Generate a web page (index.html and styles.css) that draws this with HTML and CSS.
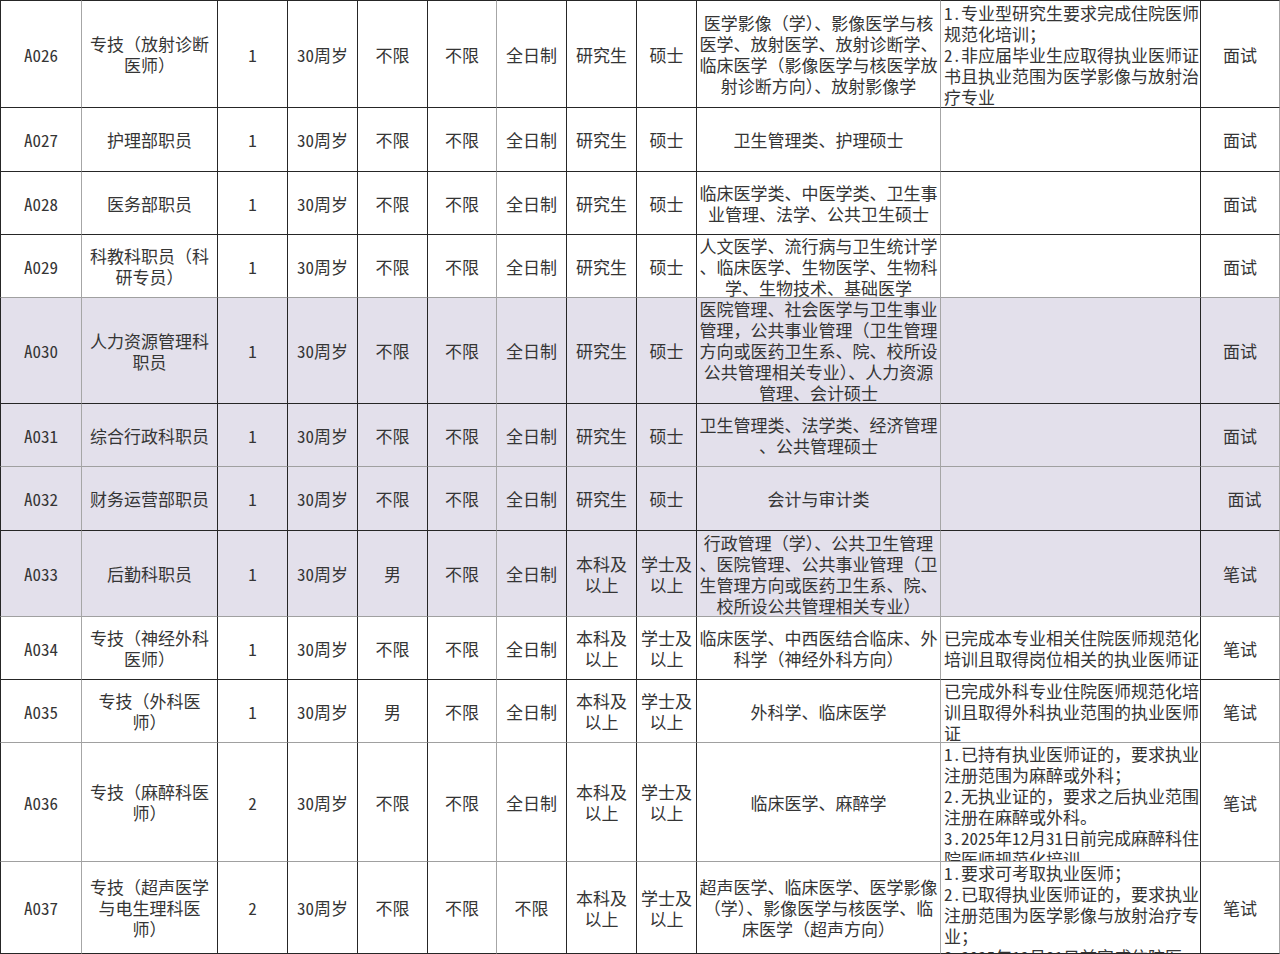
FILE: index.html
```html
<!DOCTYPE html>
<html lang="zh-CN">
<head>
<meta charset="utf-8">
<title>岗位表</title>
<link rel="stylesheet" href="styles.css">
</head>
<body>
<div class="sheet">
  <!-- A026 -->
  <div class="c c1 first">A026</div>
  <div class="c first">专技（放射诊断<br>医师）</div>
  <div class="c first">1</div>
  <div class="c first">30周岁</div>
  <div class="c first">不限</div>
  <div class="c g first">不限</div>
  <div class="c first">全日制</div>
  <div class="c first">研究生</div>
  <div class="c first">硕士</div>
  <div class="c g first">医学影像（学）、影像医学与核<br>医学、放射医学、放射诊断学、<br>临床医学（影像医学与核医学放<br>射诊断方向）、放射影像学</div>
  <div class="c rm first">1.专业型研究生要求完成住院医师<br>规范化培训；<br>2.非应届毕业生应取得执业医师证<br>书且执业范围为医学影像与放射治<br>疗专业</div>
  <div class="c ge first">面试</div>

  <!-- A027 -->
  <div class="c c1">A027</div>
  <div class="c">护理部职员</div>
  <div class="c">1</div>
  <div class="c">30周岁</div>
  <div class="c">不限</div>
  <div class="c g">不限</div>
  <div class="c">全日制</div>
  <div class="c">研究生</div>
  <div class="c">硕士</div>
  <div class="c g">卫生管理类、护理硕士</div>
  <div class="c rm"></div>
  <div class="c ge">面试</div>

  <!-- A028 -->
  <div class="c c1">A028</div>
  <div class="c">医务部职员</div>
  <div class="c">1</div>
  <div class="c">30周岁</div>
  <div class="c">不限</div>
  <div class="c g">不限</div>
  <div class="c">全日制</div>
  <div class="c">研究生</div>
  <div class="c">硕士</div>
  <div class="c g">临床医学类、中医学类、卫生事<br>业管理、法学、公共卫生硕士</div>
  <div class="c rm"></div>
  <div class="c ge">面试</div>

  <!-- A029 -->
  <div class="c c1 gb">A029</div>
  <div class="c gb">科教科职员（科<br>研专员）</div>
  <div class="c gb">1</div>
  <div class="c gb">30周岁</div>
  <div class="c gb">不限</div>
  <div class="c g gb">不限</div>
  <div class="c gb">全日制</div>
  <div class="c gb">研究生</div>
  <div class="c gb">硕士</div>
  <div class="c g gb">人文医学、流行病与卫生统计学<br>、临床医学、生物医学、生物科<br>学、生物技术、基础医学</div>
  <div class="c rm gb"></div>
  <div class="c ge gb">面试</div>

  <!-- A030 -->
  <div class="c c1 p">A030</div>
  <div class="c p">人力资源管理科<br>职员</div>
  <div class="c p">1</div>
  <div class="c p">30周岁</div>
  <div class="c p">不限</div>
  <div class="c g p">不限</div>
  <div class="c p">全日制</div>
  <div class="c p">研究生</div>
  <div class="c p">硕士</div>
  <div class="c g p">医院管理、社会医学与卫生事业<br>管理，公共事业管理（卫生管理<br>方向或医药卫生系、院、校所设<br>公共管理相关专业）、人力资源<br>管理、会计硕士</div>
  <div class="c rm p"></div>
  <div class="c ge p">面试</div>

  <!-- A031 -->
  <div class="c c1 p gb">A031</div>
  <div class="c p gb">综合行政科职员</div>
  <div class="c p gb">1</div>
  <div class="c p gb">30周岁</div>
  <div class="c p gb">不限</div>
  <div class="c g p gb">不限</div>
  <div class="c p gb">全日制</div>
  <div class="c p gb">研究生</div>
  <div class="c p gb">硕士</div>
  <div class="c g p gb">卫生管理类、法学类、经济管理<br>、公共管理硕士</div>
  <div class="c rm p gb"></div>
  <div class="c ge p gb">面试</div>

  <!-- A032 -->
  <div class="c c1 p">A032</div>
  <div class="c p">财务运营部职员</div>
  <div class="c p">1</div>
  <div class="c p">30周岁</div>
  <div class="c p">不限</div>
  <div class="c g p">不限</div>
  <div class="c p">全日制</div>
  <div class="c p">研究生</div>
  <div class="c p">硕士</div>
  <div class="c g p">会计与审计类</div>
  <div class="c rm p"></div>
  <div class="c ge p nudge">面试</div>

  <!-- A033 -->
  <div class="c c1 p gb">A033</div>
  <div class="c p gb">后勤科职员</div>
  <div class="c p gb">1</div>
  <div class="c p gb">30周岁</div>
  <div class="c p gb">男</div>
  <div class="c g p gb">不限</div>
  <div class="c p gb">全日制</div>
  <div class="c p gb">本科及<br>以上</div>
  <div class="c p gb">学士及<br>以上</div>
  <div class="c g p gb">行政管理（学）、公共卫生管理<br>、医院管理、公共事业管理（卫<br>生管理方向或医药卫生系、院、<br>校所设公共管理相关专业）</div>
  <div class="c rm p gb"></div>
  <div class="c ge p gb">笔试</div>

  <!-- A034 -->
  <div class="c c1">A034</div>
  <div class="c">专技（神经外科<br>医师）</div>
  <div class="c">1</div>
  <div class="c">30周岁</div>
  <div class="c">不限</div>
  <div class="c g">不限</div>
  <div class="c">全日制</div>
  <div class="c">本科及<br>以上</div>
  <div class="c">学士及<br>以上</div>
  <div class="c g">临床医学、中西医结合临床、外<br>科学（神经外科方向）</div>
  <div class="c rm">已完成本专业相关住院医师规范化<br>培训且取得岗位相关的执业医师证</div>
  <div class="c ge">笔试</div>

  <!-- A035 -->
  <div class="c c1 gb">A035</div>
  <div class="c gb">专技（外科医<br>师）</div>
  <div class="c gb">1</div>
  <div class="c gb">30周岁</div>
  <div class="c gb">男</div>
  <div class="c g gb">不限</div>
  <div class="c gb">全日制</div>
  <div class="c gb">本科及<br>以上</div>
  <div class="c gb">学士及<br>以上</div>
  <div class="c g gb">外科学、临床医学</div>
  <div class="c rm gb">已完成外科专业住院医师规范化培<br>训且取得外科执业范围的执业医师<br>证</div>
  <div class="c ge gb">笔试</div>

  <!-- A036 -->
  <div class="c c1 gb">A036</div>
  <div class="c gb">专技（麻醉科医<br>师）</div>
  <div class="c gb">2</div>
  <div class="c gb">30周岁</div>
  <div class="c gb">不限</div>
  <div class="c g gb">不限</div>
  <div class="c gb">全日制</div>
  <div class="c gb">本科及<br>以上</div>
  <div class="c gb">学士及<br>以上</div>
  <div class="c g gb">临床医学、麻醉学</div>
  <div class="c rm top gb">1.已持有执业医师证的，要求执业<br>注册范围为麻醉或外科；<br>2.无执业证的，要求之后执业范围<br>注册在麻醉或外科。<br>3.2025年12月31日前完成麻醉科住<br>院医师规范化培训</div>
  <div class="c ge gb">笔试</div>

  <!-- A037 -->
  <div class="c c1">A037</div>
  <div class="c">专技（超声医学<br>与电生理科医<br>师）</div>
  <div class="c">2</div>
  <div class="c">30周岁</div>
  <div class="c">不限</div>
  <div class="c g">不限</div>
  <div class="c">不限</div>
  <div class="c">本科及<br>以上</div>
  <div class="c">学士及<br>以上</div>
  <div class="c g">超声医学、临床医学、医学影像<br>（学）、影像医学与核医学、临<br>床医学（超声方向）</div>
  <div class="c rm top">1.要求可考取执业医师；<br>2.已取得执业医师证的，要求执业<br>注册范围为医学影像与放射治疗专<br>业；<br>3.2025年12月31日前完成住院医</div>
  <div class="c ge">笔试</div>
</div>
</body>
</html>
```

FILE: styles.css
```css
html, body {
  margin: 0;
  padding: 0;
  background: #ffffff;
}

body {
  width: 1280px;
  height: 954px;
  overflow: hidden;
  font-family: "Noto Sans Mono CJK SC", "Noto Sans CJK SC", "DejaVu Sans", sans-serif;
  font-size: 17px;
  line-height: 21px;
  color: #353535;
}

.sheet {
  display: grid;
  grid-template-columns: 82px 136px 70px 70px 70px 69px 70px 70px 60px 244px 260px 79px;
  grid-template-rows: 108px 64px 63px 63px 106px 63px 64px 86px 63px 63px 119px 92px;
  width: 1280px;
}

.c {
  box-sizing: border-box;
  display: flex;
  align-items: center;
  justify-content: center;
  text-align: center;
  white-space: nowrap;
  overflow: hidden;
  border-right: 1px solid #262626;
  border-bottom: 1px solid #262626;
  background: #ffffff;
}

.c1 {
  border-left: 1px solid #262626;
  border-right-color: #a6a6a6;
}

.first {
  border-top: 1px solid #262626;
}

.g {
  border-right-color: #a6a6a6;
}

.ge {
  border-right-color: #a6a6a6;
}

.gb {
  border-bottom-color: #a0a0a0;
}

.p {
  background: #e3e0eb;
}

.rm {
  justify-content: flex-start;
  text-align: left;
  padding-left: 3px;
}

.top {
  align-items: flex-start;
}

.nudge {
  padding-left: 9px;
}
```
